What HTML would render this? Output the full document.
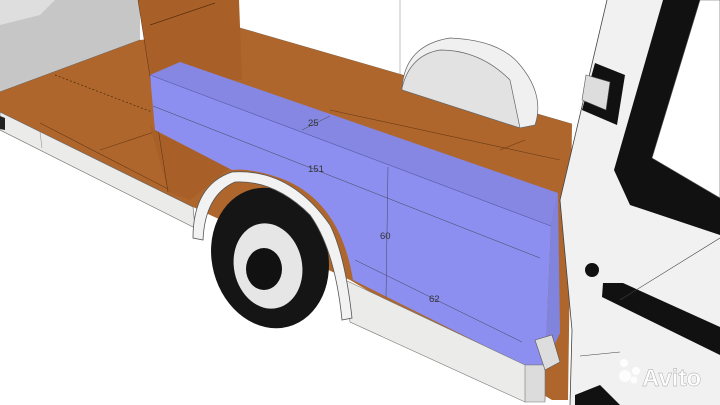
<!DOCTYPE html>
<html><head><style>
html,body{margin:0;padding:0;width:720px;height:405px;overflow:hidden;background:#fff}
</style></head><body>
<svg width="720" height="405" viewBox="0 0 720 405" xmlns="http://www.w3.org/2000/svg" style="display:block">
<rect width="720" height="405" fill="#fff"/>
<!-- gray back area -->
<polygon points="0,0 140,0 140,40 0,92" fill="#c6c6c6"/>
<polygon points="0,0 55,0 40,15 0,25" fill="#dedede"/>
<line x1="0" y1="92" x2="140" y2="40" stroke="#555" stroke-width="0.6"/>
<!-- background lines -->
<line x1="400" y1="0" x2="400" y2="80" stroke="#999" stroke-width="0.6"/>
<line x1="240" y1="28" x2="572" y2="124" stroke="#555" stroke-width="0.6"/>
<!-- floor -->
<polygon points="0,92 140,40 240,28 572,124 568,400 552,400 350,280 193,207 0,112" fill="#ae662c"/>
<line x1="55" y1="75" x2="152" y2="112" stroke="#4a2808" stroke-width="0.7" stroke-dasharray="2,2"/>
<line x1="40" y1="123" x2="170" y2="190" stroke="#6a3a15" stroke-width="0.6"/>
<line x1="100" y1="150" x2="160" y2="130" stroke="#6a3a15" stroke-width="0.6"/>
<line x1="330" y1="110" x2="560" y2="160" stroke="#6a3a15" stroke-width="0.6"/>
<line x1="500" y1="150" x2="525" y2="140" stroke="#6a3a15" stroke-width="0.6"/>
<!-- white skirt -->
<polygon points="0,112 193,207 195,228 0,130" fill="#ebebea" stroke="#666" stroke-width="0.6"/>
<line x1="40" y1="132" x2="42" y2="148" stroke="#888" stroke-width="0.5"/>
<polygon points="0,116 5,118 5,130 0,129" fill="#222"/>
<!-- pillar -->
<polygon points="138,0 239,0 242,80 150,75" fill="#a85f28"/>
<polygon points="150,125 168,192 190,200 230,168 156,132" fill="#a85f28"/>
<line x1="150" y1="25" x2="215" y2="3" stroke="#5a3010" stroke-width="0.7"/>
<line x1="138" y1="0" x2="168" y2="192" stroke="#5a3010" stroke-width="0.5"/>
<!-- spare wheel -->
<path d="M402,88 Q405,45 450,38 Q500,40 520,65 Q545,95 535,125 L520,128 Q500,90 470,80 L402,88Z" fill="#f0f0f0" stroke="#666" stroke-width="0.7"/>
<path d="M402,88 Q410,55 440,50 Q480,50 510,80 L520,128 L402,90Z" fill="#e2e2e2" stroke="#666" stroke-width="0.7"/>
<!-- blue box top -->
<polygon points="150,75 180,62 558,193 551,226" fill="#8587e2"/>
<!-- blue box front -->
<path d="M150,75 L551,226 L545,365 L523,365 L353,280 Q340,200 280,178 Q250,168 232,170 L155,130 Z" fill="#8c8fef"/>
<polygon points="551,226 558,193 560,333 545,365" fill="#8084dc"/>
<line x1="150" y1="75" x2="551" y2="226" stroke="#5558a8" stroke-width="0.6"/>
<line x1="153" y1="106" x2="540" y2="258" stroke="#445" stroke-width="0.5"/>
<line x1="355" y1="260" x2="522" y2="342" stroke="#445" stroke-width="0.5"/>
<line x1="388" y1="167" x2="386" y2="297" stroke="#445" stroke-width="0.5"/>
<line x1="302" y1="130" x2="330" y2="116" stroke="#445" stroke-width="0.5"/>
<g font-family="Liberation Sans,sans-serif" font-size="9.5" fill="#333">
<text x="308" y="126">25</text><text x="308" y="172">151</text><text x="380" y="239">60</text><text x="429" y="302">62</text>
</g>
<!-- lower skirt right -->
<polygon points="345,280 525,365 545,365 545,400 525,402 350,322" fill="#ebebea" stroke="#777" stroke-width="0.6"/>
<polygon points="525,365 545,365 545,402 525,402" fill="#dcdcdc" stroke="#777" stroke-width="0.6"/>
<!-- wheel -->
<ellipse cx="270" cy="258" rx="58" ry="71" transform="rotate(-15 270 258)" fill="#151515"/>
<ellipse cx="268" cy="266" rx="34" ry="43" transform="rotate(-12 268 266)" fill="#e6e6e6"/>
<ellipse cx="264" cy="269" rx="18" ry="21" fill="#111"/>
<!-- fender -->
<path d="M193,238 Q193,185 232,172 Q290,168 330,225 Q345,255 352,318 L342,320 Q335,250 310,215 Q275,180 235,182 Q205,195 203,240 Z" fill="#f2f2f2" stroke="#555" stroke-width="0.8"/>
<!-- door -->
<path d="M607,0 L720,0 L720,405 L570,405 L572,330 L560,200 Z" fill="#f1f1f1"/>
<path d="M607,0 L560,200 L572,330 L570,405" fill="none" stroke="#444" stroke-width="0.8"/>
<polygon points="663,0 700,0 652,158 720,198 720,235 630,205 614,170" fill="#111"/>
<polygon points="700,0 720,0 720,198 652,158" fill="#fff" stroke="#555" stroke-width="0.6"/>
<path d="M595,63 L625,75 L617,125 L582,110 Z" fill="#111"/>
<path d="M586,75 L610,82 L606,110 L582,100 Z" fill="#ddd" stroke="#555" stroke-width="0.6"/>
<polygon points="603,283 623,283 720,327 720,355 602,297" fill="#111"/>
<ellipse cx="592" cy="270" rx="7" ry="7" fill="#111"/>
<line x1="620" y1="300" x2="720" y2="238" stroke="#444" stroke-width="0.6"/>
<line x1="580" y1="356" x2="620" y2="352" stroke="#444" stroke-width="0.6"/>
<polygon points="535,340 552,335 560,362 545,370" fill="#ddd" stroke="#555" stroke-width="0.6"/>
<polygon points="575,395 600,385 620,405 575,405" fill="#111"/>
<!-- watermark -->
<g fill="#fff" opacity="0.9">
<circle cx="625" cy="376" r="6"/><circle cx="636" cy="371" r="4"/><circle cx="624" cy="363" r="4"/><circle cx="634" cy="380" r="3.5"/>
<text x="642" y="386" font-family="Liberation Sans,sans-serif" font-size="24" font-weight="bold" fill="#fff" stroke="#999" stroke-width="0.4">Avito</text>
</g>
</svg>
</body></html>
